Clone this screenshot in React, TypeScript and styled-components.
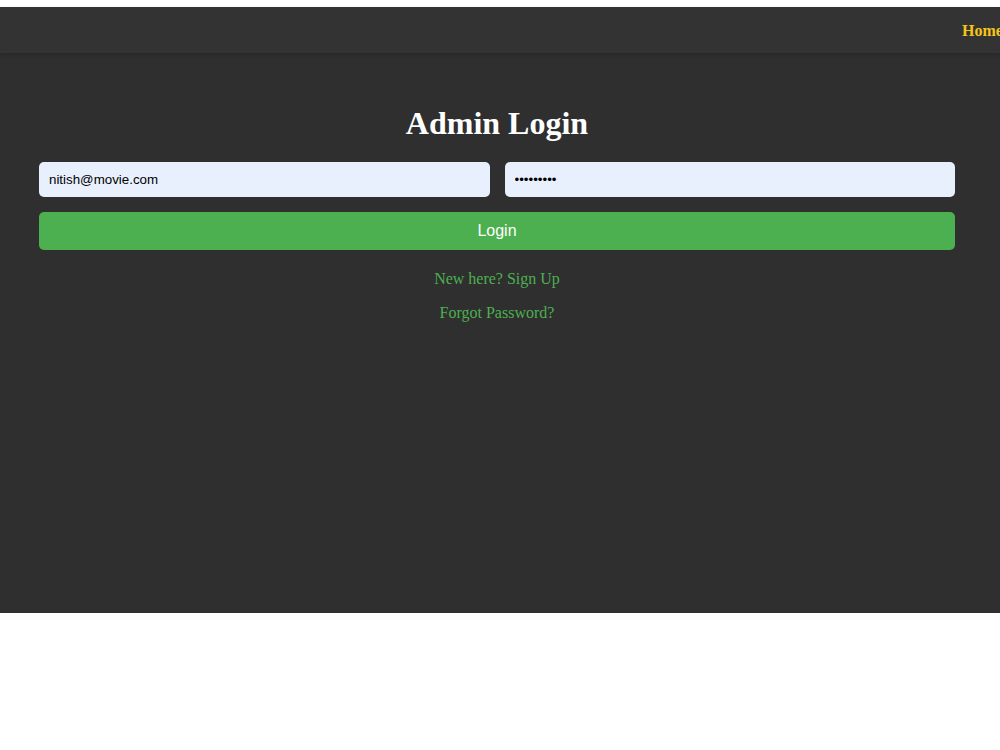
import React from "react";
import styled, { createGlobalStyle } from "styled-components";

const GlobalStyle = createGlobalStyle`
  body {
    margin: 0;
    padding-top: 7px;
    background: #fff;
    font-family: "Liberation Serif", "Times New Roman", serif;
  }
`;

const navigations = [{ label: "Home", path: "/" }];

const Navbar: React.FunctionComponent = () => (
  <Nav>
    <NavSpacer />
    <NavList>
      {navigations.map((navigation, index) => (
        <NavItem key={index}>
          <NavAnchor href={navigation.path}>{navigation.label}</NavAnchor>
        </NavItem>
      ))}
    </NavList>
  </Nav>
);

const App: React.FunctionComponent = () => (
  <>
    <GlobalStyle />
    <Navbar />
    <Main>
      <Title>Admin Login</Title>
      <Form onSubmit={(e) => e.preventDefault()}>
        <InputRow>
          <Field type="email" defaultValue="nitish@movie.com" />
          <Field type="password" defaultValue="123456789" />
        </InputRow>
        <SubmitButton type="submit">Login</SubmitButton>
      </Form>
      <LinkText $first>New here? Sign Up</LinkText>
      <LinkText>Forgot Password?</LinkText>
    </Main>
  </>
);

const Nav = styled.nav`
  display: flex;
  align-items: center;
  box-sizing: border-box;
  height: 46px;
  padding-top: 2px;
  background: #333333;
  overflow: hidden;
  box-shadow: 0 2px 4px rgba(0, 0, 0, 0.15);
  position: relative;
  z-index: 1;
`;

const NavSpacer = styled.div`
  flex: 0 0 962px;
`;

const NavList = styled.ul`
  display: flex;
  gap: 20px;
  margin: 0;
  padding: 0;
  list-style: none;
  white-space: nowrap;
`;

const NavItem = styled.li`
  display: block;
`;

const NavAnchor = styled.a`
  color: #f5c518;
  font-weight: bold;
  font-size: 16px;
  text-decoration: none;
`;

const Main = styled.main`
  height: 508px;
  padding: 52px 45px 0 39px;
  background: #2f2f2f;
  display: flex;
  flex-direction: column;
  align-items: stretch;
`;

const Title = styled.h1`
  margin: 0 0 20px;
  color: #ffffff;
  font-size: 32px;
  line-height: 37px;
  text-align: center;
`;

const Form = styled.form`
  display: flex;
  flex-direction: column;
  gap: 15px;
`;

const InputRow = styled.div`
  display: grid;
  grid-template-columns: 1fr 1fr;
  gap: 15px;
`;

const Field = styled.input`
  box-sizing: border-box;
  height: 35px;
  padding: 0 10px;
  border: none;
  border-radius: 5px;
  background: #e8f0fe;
  color: #000;
  font-family: "Liberation Sans", Arial, sans-serif;
  font-size: 13.33px;
  outline: none;
`;

const SubmitButton = styled.button`
  height: 38px;
  border: none;
  border-radius: 5px;
  background: #4caf50;
  color: #ffffff;
  font-family: "Liberation Sans", Arial, sans-serif;
  font-size: 16px;
  cursor: pointer;
`;

const LinkText = styled.p<{ $first?: boolean }>`
  margin: ${(p) => (p.$first ? "20px" : "16px")} 0 0;
  color: #4caf50;
  font-size: 16px;
  line-height: 18px;
  text-align: center;
  cursor: pointer;
`;

export default App;
